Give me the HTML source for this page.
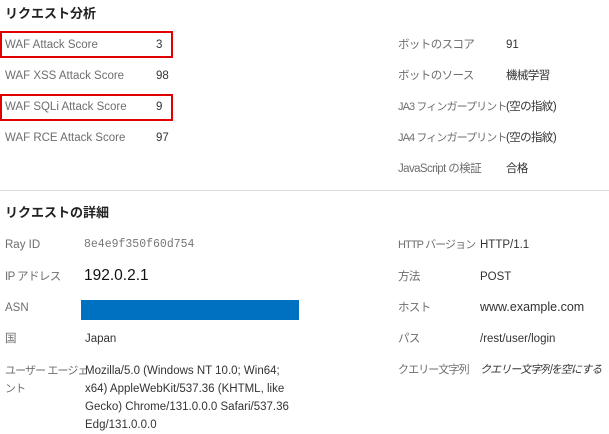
<!DOCTYPE html>
<html><head><meta charset="utf-8"><style>
body{margin:0;width:609px;height:434px;background:#fff;position:relative;overflow:hidden;font-family:"Liberation Sans","Noto Sans CJK JP",sans-serif;font-size:11.5px;line-height:16px;color:#333}
div{position:absolute;white-space:nowrap}
.h{font-weight:bold;font-size:13px;color:#222}
.l{color:#6e6e6e}
.j{font-size:11.5px;letter-spacing:-0.6px}
.n{letter-spacing:-0.9px;font-size:11px}
.v{color:#333}
.box{border:2px solid #e00000;box-sizing:border-box}
</style></head><body>
<div class="h" style="left:5px;top:6px">リクエスト分析</div>
<div class="box" style="left:0;top:31px;width:173px;height:27px"></div>
<div class="box" style="left:0;top:94px;width:173px;height:27px"></div>
<div class="l" style="left:5px;top:37px">WAF Attack Score</div><div class="v" style="left:156px;top:37px">3</div>
<div class="l" style="left:5px;top:68px">WAF XSS Attack Score</div><div class="v" style="left:156px;top:68px">98</div>
<div class="l" style="left:5px;top:99px">WAF SQLi Attack Score</div><div class="v" style="left:156px;top:99px">9</div>
<div class="l" style="left:5px;top:130px">WAF RCE Attack Score</div><div class="v" style="left:156px;top:130px">97</div>
<div class="l j" style="left:398px;top:37px">ボットのスコア</div><div class="v" style="left:506px;top:37px">91</div>
<div class="l j" style="left:398px;top:68px">ボットのソース</div><div class="v j" style="left:506px;top:68px">機械学習</div>
<div class="l n" style="left:398px;top:99px">JA3 フィンガープリント</div><div class="v j" style="left:506px;top:99px">(空の指紋)</div>
<div class="l n" style="left:398px;top:130px">JA4 フィンガープリント</div><div class="v j" style="left:506px;top:130px">(空の指紋)</div>
<div class="l j" style="left:398px;top:161px">JavaScript の検証</div><div class="v j" style="left:506px;top:161px">合格</div>
<div style="left:0;top:190px;width:609px;height:1px;background:#ddd"></div>
<div class="h" style="left:5px;top:205px">リクエストの詳細</div>
<div class="l" style="left:5px;top:237px">Ray ID</div><div style="left:84px;top:237px;font-family:'Liberation Mono',monospace;font-size:11.5px;color:#777">8e4e9f350f60d754</div>
<div class="l j" style="left:5px;top:269px">IP アドレス</div><div style="left:84px;top:268px;font-size:15.5px;color:#111">192.0.2.1</div>
<div class="l" style="left:5px;top:300px">ASN</div><div style="left:81px;top:300px;width:218px;height:20px;background:#0070c0"></div>
<div class="l j" style="left:5px;top:331px">国</div><div class="v" style="left:85px;top:331px">Japan</div>
<div class="l n" style="left:5px;top:362px;line-height:18px">ユーザー エージェ<br>ント</div>
<div class="v" style="left:85px;top:362px;line-height:18px">Mozilla/5.0 (Windows NT 10.0; Win64;<br>x64) AppleWebKit/537.36 (KHTML, like<br>Gecko) Chrome/131.0.0.0 Safari/537.36<br>Edg/131.0.0.0</div>
<div class="l n" style="left:398px;top:237px">HTTP バージョン</div><div class="v" style="left:480px;top:237px">HTTP/1.1</div>
<div class="l j" style="left:398px;top:269px">方法</div><div class="v" style="left:480px;top:269px">POST</div>
<div class="l j" style="left:398px;top:300px">ホスト</div><div class="v" style="left:480px;top:299px;font-size:12.5px">www.example.com</div>
<div class="l j" style="left:398px;top:331px">パス</div><div class="v" style="left:480px;top:331px">/rest/user/login</div>
<div class="l n" style="left:398px;top:362px">クエリー文字列</div><div class="v n" style="left:480px;top:362px;font-style:italic">クエリー文字列を空にする</div>
</body></html>
